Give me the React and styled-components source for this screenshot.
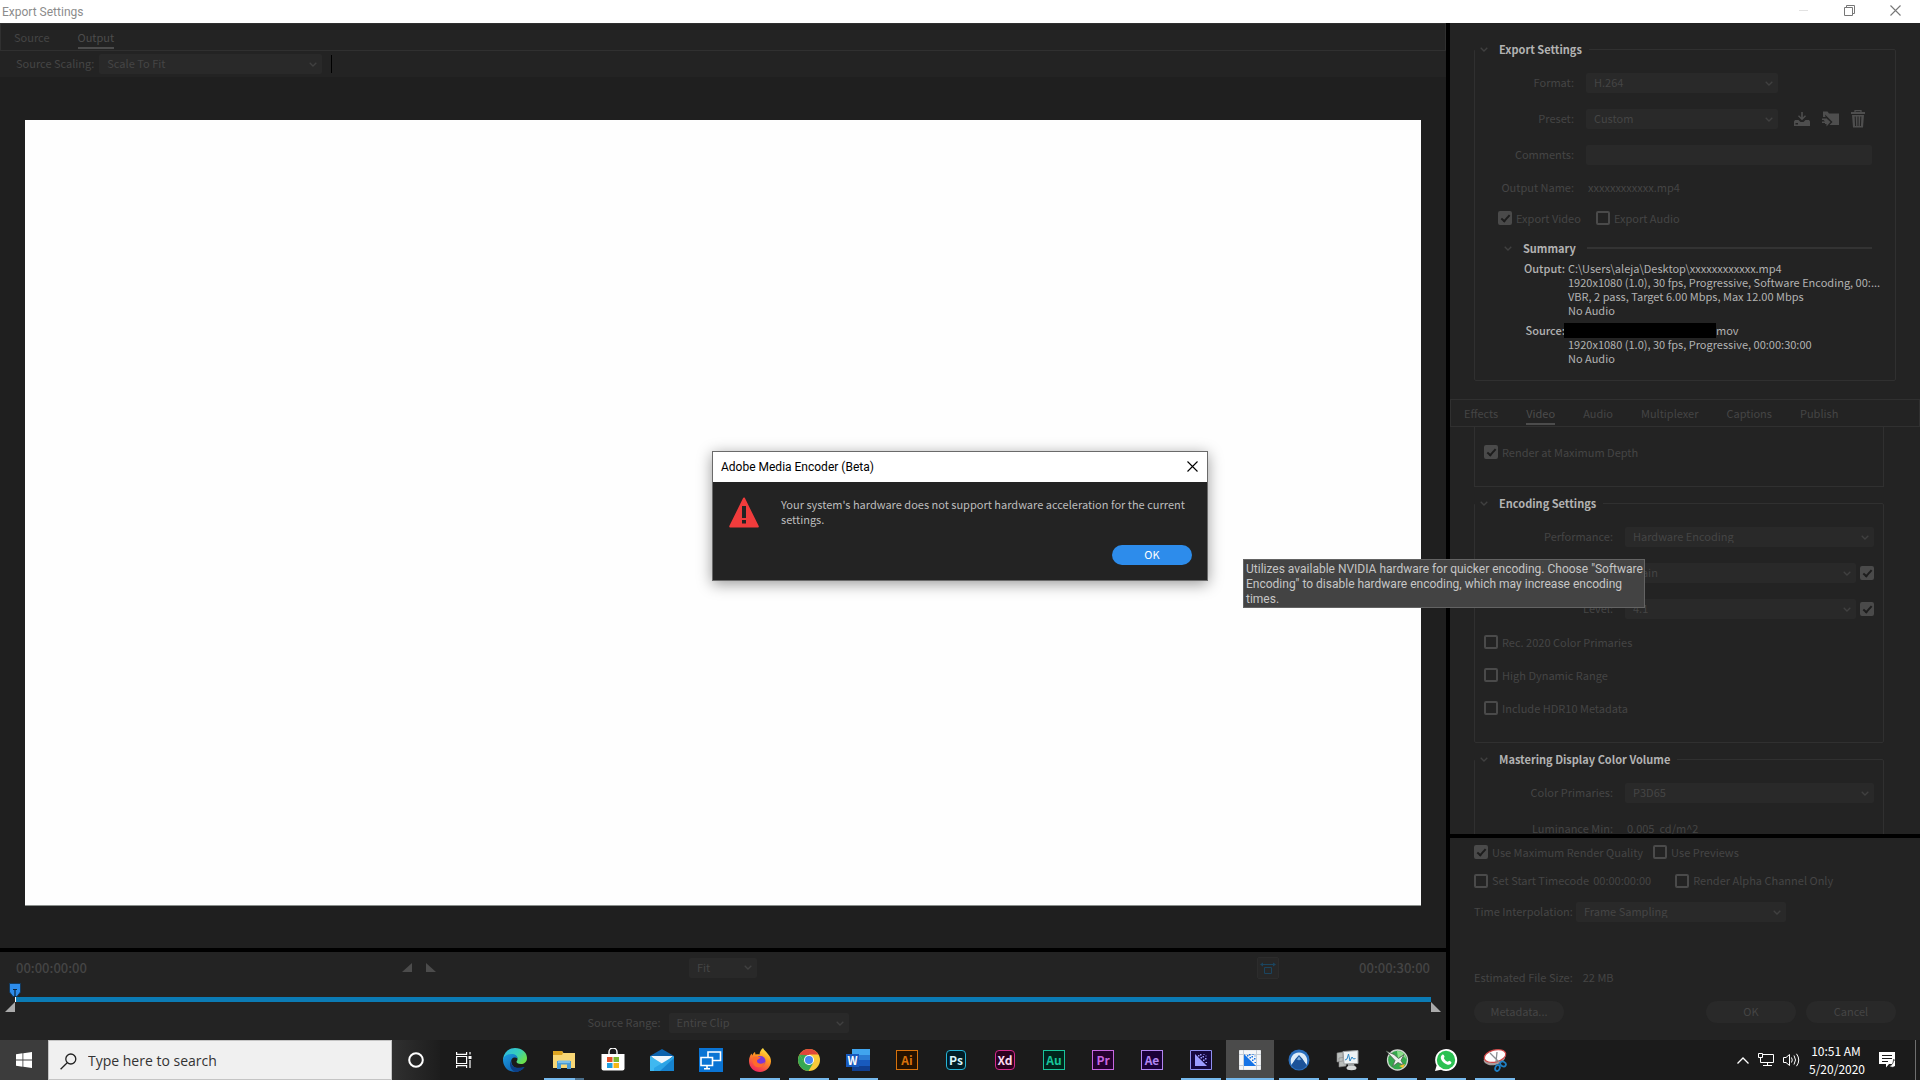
import React from "react";
import styled, { createGlobalStyle } from "styled-components";

const c = {
  panel: "#232323",
  well: "#1f1f1f",
  line: "#303030",
  field: "#292929",
  dim: "#454545",
  box: "#4a4a4a",
  text: "#b2b2b2",
  blue: "#0b7bb5",
};
const ui = `"Noto Sans CJK JP", "Noto Sans", sans-serif`;
const system = `"Open Sans", "Noto Sans", sans-serif`;
const caption = `Roboto, "Noto Sans", sans-serif`;

const Global = createGlobalStyle`
  *, *::before, *::after { box-sizing: border-box; }
  body { margin: 0; background: #000; }
  button, input, select { font: inherit; color: inherit; margin: 0; }
  svg { display: block; flex: none; }
`;

/* ---------- window ---------- */
const Screen = styled.div`
  position: relative;
  display: flex;
  flex-direction: column;
  height: 100vh;
  overflow: hidden;
  font: 11px/14px ${ui};
  color: ${c.dim};
  background: #000;
`;
const TitleBar = styled.header`
  display: flex;
  align-items: center;
  justify-content: space-between;
  flex: none;
  height: 23px;
  padding: 0 2px;
  background: #fff;
  color: #8c8c8c;
`;
const Title = styled.h1`
  margin: 0;
  font: 400 12px/16px ${caption};
`;
const WindowButtons = styled.div`
  display: flex;
  padding-bottom: 2px;
`;
const WindowButton = styled.button`
  display: grid;
  place-items: center;
  width: 46px;
  height: 20px;
  padding: 0;
  border: 0;
  background: none;
`;
const Workspace = styled.main`
  flex: 1;
  min-height: 0;
  display: grid;
  grid-template-columns: minmax(0, 1fr) 470px;
  gap: 4px;
`;
const Column = styled.div`
  display: flex;
  flex-direction: column;
  gap: 4px;
  min-height: 0;
  min-width: 0;
`;
const Panel = styled.section`
  display: flex;
  flex-direction: column;
  min-height: 0;
  flex: ${(p) => (p.$grow ? 1 : "none")};
  background: ${c.panel};
`;

/* ---------- controls ---------- */
const TabBar = styled.nav`
  display: flex;
  flex: none;
  gap: ${(p) => p.$gap}px;
  height: 28px;
  padding: 0 13px;
  border: 1px solid ${c.line};
`;
const Tab = styled.button`
  padding: 2px 0 0;
  border: 0;
  border-bottom: 2px solid ${(p) => (p.$on ? "#4c4c4c" : "transparent")};
  height: 25px;
  background: none;
  color: ${(p) => (p.$on ? "#4c4c4c" : c.dim)};
`;
const SelectBox = styled.span`
  display: grid;
  align-items: center;
  flex: ${(p) => (p.$w ? "none" : 1)};
  width: ${(p) => (p.$w ? p.$w + "px" : "auto")};
  height: 20px;
  border-radius: 2px;
  background: ${c.field};
  > * { grid-area: 1 / 1; }
  > svg { justify-self: end; margin-right: 5px; }
`;
const Native = styled.select`
  appearance: none;
  width: 100%;
  height: 20px;
  padding: 0 20px 2px 8px;
  border: 0;
  background: none;
  &:disabled { color: ${c.dim}; opacity: 1; }
`;
const TextBox = styled.input`
  flex: 1;
  min-width: 0;
  height: 20px;
  border: 0;
  border-radius: 2px;
  background: ${c.field};
`;
const Check = styled.label`
  display: flex;
  align-items: center;
  gap: 4px;
  height: 14px;
`;
const CheckText = styled.span`
  padding-bottom: 1px;
`;
const Box = styled.input`
  appearance: none;
  flex: none;
  display: grid;
  place-items: center;
  width: 14px;
  height: 14px;
  border: 2px solid ${c.box};
  border-radius: 2px;
  &:checked { background: ${c.box}; }
  &:checked::after {
    content: "";
    width: 9px;
    height: 5px;
    border: solid #1d1d1d;
    border-width: 0 0 2px 2px;
    transform: translateY(-1px) rotate(-48deg);
  }
`;
const Pill = styled.button`
  width: ${(p) => (p.$primary ? 80 : 90)}px;
  height: ${(p) => (p.$primary ? 20 : 22)}px;
  padding: 0 0 2px;
  border: 0;
  border-radius: 11px;
  background: ${(p) => (p.$primary ? "#2d8ceb" : "#292929")};
  color: ${(p) => (p.$primary ? "#fff" : c.dim)};
`;
const IconButton = styled.button`
  display: grid;
  place-items: center;
  width: ${(p) => (p.$framed ? 22 : 16)}px;
  height: ${(p) => (p.$framed ? 22 : 18)}px;
  padding: 0;
  border: ${(p) => (p.$framed ? "1px solid #2c2c2c" : 0)};
  border-radius: 2px;
  background: ${(p) => (p.$framed ? "#272727" : "none")};
  color: #4e4e4e;
`;

/* ---------- preview side ---------- */
const ScaleBar = styled.div`
  display: flex;
  align-items: center;
  gap: 5px;
  flex: none;
  height: 26px;
  padding-left: 16px;
`;
const Caption = styled.label`
  padding-bottom: 2px;
`;
const Tick = styled.span`
  width: 1px;
  height: 18px;
  margin-left: 4px;
  background: #000;
`;
const Preview = styled.div`
  flex: 1;
  display: flex;
  padding: 43px 25px 42px;
  background: ${c.well};
`;
const Canvas = styled.div`
  flex: 1;
  background: #fefefe;
  border-bottom: 1px solid #8a8f8c;
`;
const Transport = styled.div`
  display: grid;
  grid-template-columns: 1fr auto 1fr;
  align-items: center;
  height: 31px;
  padding: 0 16px;
`;
const Side = styled.div`
  display: flex;
  align-items: center;
  justify-content: ${(p) => (p.$end ? "flex-end" : "space-between")};
  gap: 80px;
  padding-right: ${(p) => (p.$end ? 0 : 250)}px;
`;
const Marks = styled.div`
  display: flex;
  gap: 8px;
`;
const Time = styled.output`
  font-size: 13px;
  font-weight: 500;
`;
const Timeline = styled.div`
  display: grid;
  grid-template-columns: 10px minmax(0, 1fr) 10px;
  grid-template-rows: 14px 5px 10px;
  padding: 0 5px;
`;
const Track = styled.div`
  grid-area: 2 / 2;
  background: ${c.blue};
  border-left: 1px solid #fff;
`;
const Playhead = styled.div`
  grid-area: 1 / 1 / 2 / 3;
  padding-left: 4px;
`;
const Handle = styled.div`
  grid-area: ${(p) => (p.$end ? "3 / 3" : "3 / 1")};
  width: 10px;
  height: 10px;
  background: #aaa;
  clip-path: ${(p) => (p.$end ? "polygon(0 0, 100% 100%, 0 100%)" : "polygon(100% 0, 100% 100%, 0 100%)")};
`;
const RangeRow = styled.div`
  display: flex;
  justify-content: center;
  align-items: center;
  gap: 8px;
  height: 28px;
  padding: 0 10px 6px 0;
`;

/* ---------- settings side ---------- */
const Group = styled.fieldset`
  margin: ${(p) => p.$margin};
  min-width: 0;
  padding: 15px 9px ${(p) => p.$bottom || 27}px 0;
  border: 1px solid ${c.line};
  border-radius: 2px;
  flex: none;
`;
const Legend = styled.legend`
  display: flex;
  align-items: center;
  gap: 11px;
  height: 18px;
  padding: 0 7px 0 5px;
  font-weight: 700;
  color: ${c.text};
`;
const Stack = styled.div`
  display: flex;
  flex-direction: column;
  gap: ${(p) => p.$gap}px;
  padding: ${(p) => p.$pad || 0};
`;
const Field = styled.div`
  display: grid;
  grid-template-columns: ${(p) => p.$label}px minmax(0, 1fr);
  gap: 12px;
  align-items: center;
  height: 20px;
  > label, > span:first-child {
    padding-bottom: 2px;
    text-align: right;
  }
`;
const Value = styled.span`
  padding: 0 0 2px 2px;
`;
const Inline = styled.div`
  display: flex;
  align-items: center;
  gap: ${(p) => p.$gap}px;
  padding: ${(p) => p.$pad || 0};
`;
const Icons = styled.div`
  display: flex;
  gap: 12px;
  padding-left: 16px;
`;
const SummaryHead = styled.h2`
  display: flex;
  align-items: center;
  gap: 11px;
  height: 20px;
  margin: 0;
  padding: 0 14px 0 29px;
  font-size: 11px;
  color: ${c.text};
  &::after {
    content: "";
    flex: 1;
    height: 2px;
    background: #333;
  }
`;
const Facts = styled.dl`
  display: grid;
  grid-template-columns: 90px minmax(0, 1fr);
  column-gap: 3px;
  row-gap: 6px;
  margin: 0;
  padding-top: 3px;
  color: ${c.text};
`;
const Term = styled.dt`
  text-align: right;
  font-weight: 500;
`;
const Detail = styled.dd`
  margin: 0;
`;
const Line = styled.div`
  display: flex;
  white-space: nowrap;
`;
const Redacted = styled.span`
  width: 152px;
  height: 15px;
  margin-bottom: -1px;
  background: #000;
`;
const RedactedLine = styled(Line)`
  margin-left: -4px;
`;
const Scroll = styled.div`
  flex: 1;
  min-height: 0;
  overflow: hidden;
`;
const Tail = styled.div`
  height: 60px;
  margin: 0 36px 0 24px;
  padding: 18px 9px;
  border: 1px solid ${c.line};
  border-top: 0;
`;
const Footer = styled.div`
  display: flex;
  flex-direction: column;
  height: 202px;
  padding: 7px 24px 17px;
`;
const Actions = styled.div`
  display: flex;
  gap: 10px;
  padding-top: 16px;
  > :first-child { margin-right: auto; }
`;

/* ---------- overlays ---------- */
const Dialog = styled.div`
  position: absolute;
  top: 451px;
  left: 50%;
  width: 496px;
  margin-left: -248px;
  border: 1px solid #6a6a6a;
  background: ${c.panel};
  color: #bdbdbd;
  box-shadow: 0 3px 14px rgba(0, 0, 0, 0.4);
`;
const DialogTitle = styled.div`
  display: flex;
  align-items: center;
  justify-content: space-between;
  height: 30px;
  padding: 0 0 0 8px;
  background: #fff;
  color: #000;
  font: 12px/16px ${caption};
`;
const DialogClose = styled(WindowButton)`
  width: 30px;
  height: 30px;
  padding-bottom: 2px;
`;
const DialogBody = styled.div`
  display: flex;
  gap: 22px;
  padding: 15px 15px 0 16px;
  line-height: 15px;
`;
const Message = styled.p`
  margin: 0;
`;
const DialogFoot = styled.div`
  display: flex;
  justify-content: flex-end;
  padding: 17px 15px 15px;
`;
const Tooltip = styled.div`
  position: absolute;
  top: 559px;
  right: 275px;
  width: 402px;
  padding: 2px 0 0 2px;
  border: 1px solid #636363;
  background: #434343;
  color: #c6c6c6;
  font: 12px/15px ${caption};
`;

/* ---------- taskbar ---------- */
const Taskbar = styled.footer`
  display: flex;
  flex: none;
  height: 40px;
  background: #1b1b1b;
  color: #fff;
`;
const Start = styled.button`
  display: grid;
  place-items: center;
  width: 48px;
  padding: 0;
  border: 0;
  background: #3c3c3c;
`;
const Search = styled.label`
  display: flex;
  align-items: center;
  gap: 11px;
  width: 344px;
  padding: 2px 0 0 11px;
  background: #f0f0f0;
  border: 1px solid #c4c4c4;
`;
const SearchInput = styled.input`
  flex: 1;
  min-width: 0;
  padding: 0;
  border: 0;
  outline: 0;
  background: none;
  font: 14px/20px ${system};
  &::placeholder { color: #333; opacity: 1; }
`;
const ShellButton = styled.button`
  display: grid;
  place-items: center;
  width: 48px;
  padding: 0;
  border: 0;
  background: ${(p) => (p.$lit ? "linear-gradient(90deg, #303030, #1d1d1d)" : "none")};
`;
const Apps = styled.div`
  display: flex;
  flex: 1;
  gap: 1px;
  padding-left: 3px;
`;
const AppButton = styled.button`
  display: flex;
  flex-direction: column;
  align-items: center;
  justify-content: center;
  width: 48px;
  padding: 2px 0 0;
  border: 0;
  background: ${(p) => (p.$active ? "#4b4b4b" : "none")};
  &::after {
    content: "";
    width: ${(p) => (p.$active ? 48 : 40)}px;
    height: 2px;
    background: ${(p) =>
      p.$stacked
        ? "linear-gradient(90deg, #76b9ed 31px, #4a6f8c 31px)"
        : p.$running || p.$active
        ? "#76b9ed"
        : "none"};
  }
`;
const IconSlot = styled.span`
  display: grid;
  place-items: center;
  flex: 1;
`;
const Adobe = styled.span`
  display: grid;
  place-items: center;
  width: ${(p) => (p.$round ? 20 : 22)}px;
  height: 20px;
  padding-bottom: 1px;
  border: 1px solid ${(p) => p.$fg};
  border-radius: ${(p) => (p.$round ? 4 : 0)}px;
  background: ${(p) => p.$bg};
  color: ${(p) => p.$ink || p.$fg};
  font: 700 12px/14px ${ui};
`;
const Tray = styled.div`
  display: flex;
  align-items: center;
  gap: 9px;
`;
const Clock = styled.time`
  width: 54px;
  margin-right: 7px;
  text-align: center;
  font: 12px/18px ${ui};
`;
const Peek = styled.span`
  width: 5px;
  height: 40px;
  margin-left: 11px;
  border-left: 1px solid #6e6e6e;
`;

/* ---------- drawings ---------- */
const Chevron = () => (
  <svg width="8" height="5" viewBox="0 0 8 5" fill="none" stroke="#404040" strokeWidth="1.3">
    <path d="M.7.7 4 4 7.3.7" />
  </svg>
);
const Cross = ({ color }) => (
  <svg width="11" height="11" viewBox="0 0 11 11" stroke={color} strokeWidth="1.1">
    <path d="M.5.5l10 10M10.5.5l-10 10" />
  </svg>
);
const Triangle = ({ flip }) => (
  <svg width="10" height="9" viewBox="0 0 10 9" fill="#4c4c4c">
    <path d={flip ? "M0 0v9h10z" : "M10 0v9H0z"} />
  </svg>
);
const SavePreset = () => (
  <svg width="16" height="15" viewBox="0 0 16 15" fill="currentColor">
    <path d="M7.2 0h1.6v5.400l2.200-2.200 1 1L8 8.300 4 4.200l1-1 2.200 2.200z" />
    <path d="M0 9.500 1 8h3.500l2 2h3l2-2H15l1 1.500V14H0z" />
    <path d="M1.500 11H4v1.500H1.500z" fill="#232323" />
  </svg>
);
const ImportPreset = () => (
  <svg width="17" height="16" viewBox="0 0 17 16">
    <path d="M1 .5h4.500l1.500 2h10V14H1z" fill="currentColor" />
    <path d="M0 6h3.500l-.5-2.500L9 9.500 10.500 11 5.500 16H0z" fill="#232323" />
    <path d="M0 7.500h4L7.500 11 4.500 14.500V12H0v-1.500h3L1.500 9H0zM4 7l4.500 4-4 4.500V13H3v-3h1.500z" fill="currentColor" />
  </svg>
);
const Trash = () => (
  <svg width="16" height="18" viewBox="0 0 16 18">
    <path d="M5 2V.7h6V2" fill="none" stroke="currentColor" strokeWidth="1.300" />
    <path d="M1 2h14v2H1zM2 5h12l-1 12.500H3z" fill="currentColor" />
    <path d="M5.200 6.500l.4 9.500M8 6.500V16M10.800 6.500l-.4 9.500" stroke="#232323" strokeWidth="1.100" />
  </svg>
);
const Aspect = () => (
  <svg width="16" height="14" viewBox="0 0 16 14" fill="none" stroke="#1b455f">
    <path d="M1 3.500h14M4.500 12.500v-6h7v6z" />
    <path d="M0 3.500 3 1.500v4zM16 3.500l-3-2v4z" fill="#1b455f" stroke="none" />
  </svg>
);
const PlayheadIcon = () => (
  <svg width="12" height="14" viewBox="0 0 12 14">
    <path d="M.5.500h11V9L8 13.500H4L.5 9z" fill="#2d8ceb" stroke="#123a5e" />
    <path d="M4 6.500h4M6 6.500V14" stroke="#10263a" strokeWidth="1.200" />
  </svg>
);
const Warning = () => (
  <svg width="30" height="31" viewBox="0 0 30 31">
    <path d="M15 1.500 28.800 29.500H1.200z" fill="#f03c3c" stroke="#f03c3c" strokeWidth="2" strokeLinejoin="round" />
    <path d="M13 9h4v12h-4zM13 23h4v3.500h-4z" fill="#232323" />
  </svg>
);
const WinLogo = () => (
  <svg width="16" height="16" viewBox="0 0 16 16" fill="#fff">
    <path d="M0 2.200 6.500 1.300V7.600H0zM7.300 1.200 16 0v7.600H7.300zM0 8.400h6.500v6.300L0 13.800zM7.300 8.400H16V16l-8.700-1.200z" />
  </svg>
);
const Magnifier = () => (
  <svg width="17" height="17" viewBox="0 0 17 17" fill="none" stroke="#222" strokeWidth="1.300">
    <circle cx="10.800" cy="6" r="5" />
    <path d="M7.200 9.700.6 16.300" />
  </svg>
);
const Cortana = () => (
  <svg width="16" height="16" viewBox="0 0 16 16" fill="none" stroke="#fff" strokeWidth="2">
    <circle cx="8" cy="8" r="6.800" />
  </svg>
);
const TaskView = () => (
  <svg width="16" height="16" viewBox="0 0 16 16" fill="none" stroke="#fff" strokeWidth="1.200">
    <path d="M.6 4.500h10v7h-10zM.6 0v2.300h10V0M.6 16v-2.300h10V16M14 0v2.500M14 8v8" />
    <path d="M12.500 4h3v3h-3z" fill="#fff" stroke="none" />
  </svg>
);
const Edge = () => (
  <svg width="24" height="24" viewBox="0 0 24 24">
    <defs>
      <linearGradient id="edgeTop" x1="0" y1="0" x2="1" y2=".6">
        <stop offset="0" stopColor="#2bb5ea" />
        <stop offset=".6" stopColor="#38cfb8" />
        <stop offset="1" stopColor="#6be04d" />
      </linearGradient>
      <linearGradient id="edgeLow" x1="0" y1="0" x2="1" y2="1">
        <stop offset="0" stopColor="#1b9de2" />
        <stop offset="1" stopColor="#0c4fa0" />
      </linearGradient>
    </defs>
    <path d="M0 11C1 4 6 0 12 0c7 0 12 4.500 12 10 0 4-3 6-6 6-3.200 0-4.500-1.300-4.500-2.200 0-.8 1-1.100 1-2.800C14.500 8.500 12 7 9 7 4 7 1 9 0 13z" fill="url(#edgeTop)" />
    <path d="M0 12C.5 8.500 4 6 8.500 6c4 0 6 2 6 4.600-1-1-2.300-1.300-3.500-1C8 10.500 7.500 13.500 9 16.500c2 4 7 5 12.500 2.500C19 22.500 15.500 24 12 24 5 24 0 18.500 0 12z" fill="url(#edgeLow)" />
    <path d="M8.300 12.500C7.500 18 12 21.500 21.500 19 19 22.600 15.500 24 12 24 7.500 22 5.500 16 8.300 12.500z" fill="#0d3f86" />
  </svg>
);
const Explorer = () => (
  <svg width="22" height="20" viewBox="0 0 22 20">
    <path d="M0 1h9l1.500 2H22v15H0z" fill="#f8d775" />
    <path d="M0 1h9l1 2-1 2H0z" fill="#dda521" />
    <path d="M4 11h14v8h-4v-4.500H8V19H4z" fill="#4a9cd6" />
    <path d="M5 10.500h12V13H5z" fill="#7cc0ea" />
  </svg>
);
const Store = () => (
  <svg width="24" height="24" viewBox="0 0 24 24">
    <path d="M8 6V4a4 4 0 0 1 8 0v2" fill="none" stroke="#fff" strokeWidth="1.400" />
    <path d="M.5 6h23v14.500a2 2 0 0 1-2 2h-19a2 2 0 0 1-2-2z" fill="#fff" />
    <path d="M6 9h5.500v5H6z" fill="#e5502a" />
    <path d="M12.500 9H18v5h-5.500z" fill="#7db72f" />
    <path d="M6 15h5.500v5H6z" fill="#1f9fe0" />
    <path d="M12.500 15H18v5h-5.500z" fill="#f7b718" />
  </svg>
);
const Mail = () => (
  <svg width="24" height="22" viewBox="0 0 24 22">
    <path d="M0 7 12 0l12 7v2H0z" fill="#0a62ad" />
    <path d="M1 7h22L14 15H8z" fill="#eef6fc" />
    <path d="M0 7l12 7.500L7 22H0z" fill="#3fb8f0" />
    <path d="M24 7 4 19v3h20z" fill="#2ba4e6" />
    <path d="M24 9v13H10z" fill="#1683cf" />
  </svg>
);
const Remote = () => (
  <svg width="24" height="24" viewBox="0 0 24 24">
    <path d="M0 0h24v24H0z" fill="#0a74d4" />
    <g stroke="#fff" strokeWidth="1.600" fill="#0a74d4">
      <path d="M9 4h12.500v8.500H9z" />
      <path d="M2 9.500h11.500v8H2zM8 17.500V20.500M5 20.800h6" />
    </g>
  </svg>
);
const Firefox = () => (
  <svg width="24" height="24" viewBox="0 0 24 24">
    <defs>
      <linearGradient id="fox" x1=".8" y1="0" x2=".3" y2="1">
        <stop offset="0" stopColor="#fff04a" />
        <stop offset=".4" stopColor="#ff9a1f" />
        <stop offset="1" stopColor="#f0225f" />
      </linearGradient>
    </defs>
    <path d="M15 0c1 2.500 3 3 4.500 5.500C22 8 23 10.500 23 13.500 22.500 19.500 18 24 12 24S1 19.500 1 13c0-3 1-5.500 2.500-7.500l.8 2C5 5.500 6 4.500 7 4l.5 2.500c1.500-.5 3-.5 4 0C11.500 4 13 1.500 15 0z" fill="url(#fox)" />
    <circle cx="12.500" cy="13" r="5" fill="#7a37d8" />
    <path d="M5 9c3-1.500 5 .5 7.500 0 0 2-3.500 2-3.500 4 0 3 5 4 8 1-1 4-4.500 6-8 5-4-1-5.500-6-4-10z" fill="#ff6a2b" />
  </svg>
);
const Chrome = () => (
  <svg width="22" height="22" viewBox="0 0 22 22">
    <circle cx="11" cy="11" r="11" fill="#f9cb3a" />
    <path d="M11 11 1.500 5.500A11 11 0 0 1 20.500 5.500H11z" fill="#e0473a" />
    <path d="M1.500 5.500A11 11 0 0 0 10.500 22L15.500 13.500 6.300 13.600z" fill="#36a853" />
    <path d="M1.500 5.500 6.500 14 11 6z" fill="#36a853" />
    <path d="M1.500 5.500 4.500 2.200 11 6z" fill="#e0473a" />
    <circle cx="11" cy="11" r="5" fill="#fff" />
    <circle cx="11" cy="11" r="4" fill="#4486f4" />
  </svg>
);
const WordIcon = styled.span`
  display: grid;
  align-items: center;
  width: 24px;
  height: 22px;
  padding: 4px 0;
  background: linear-gradient(#41a5ee 0 6px, #2b7cd3 6px 11px, #185abd 11px 17px, #103f91 17px) 6px 0 / 18px 22px no-repeat;
  > b {
    width: 13px;
    background: #185abd;
    text-align: center;
    font: 700 11px/13px ${ui};
  }
`;
const Encoder = ({ beta }) => (
  <svg width="22" height="20" viewBox="0 0 22 20">
    <path d="M.5.500h21v19H.5z" fill={beta ? "#f4f6f8" : "#15073f"} stroke={beta ? "#e8eaec" : "#8f8ff0"} />
    {beta && <path d="M4.500 0v20M17.500 0v20M0 4.500h22M0 15.500h22" stroke="#c3cdd8" fill="none" />}
    <g fill={beta ? "#1473e6" : "#9b9bff"}>
      <path d="M5 4 17 16H5z" />
      <path d="M8 5h1.500v1.500H8zM10.500 7H12v1.500h-1.500zM13 9.500h1.500V11H13zM10 4h1.500v1.500H10zM12.500 6H14v1.500h-1.500zM15 8h1.500v1.500H15zM13.500 4h1v1h-1zM15.500 5.500h1v1h-1zM15.500 12h1.500v1h-1.500z" />
    </g>
  </svg>
);
const Nord = () => (
  <svg width="22" height="22" viewBox="0 0 22 22">
    <circle cx="11" cy="11" r="10.500" fill="#2a6ebc" />
    <path d="M3.500 16C1 9 5 3.500 11 3.500S21 9 18.500 16L14 9.500 11 6 8 9.500z" fill="#dcebf8" />
    <path d="M3.500 16 8 9.500 11 6.500l3 3 4.500 6.500c-3.500 6-11.500 6-15 0z" fill="#1c5298" />
    <path d="M8.500 11 11 7.500l2.500 3.500-1.500-.6-1 1-1-1z" fill="#7fb2e2" />
  </svg>
);
const Monitor = () => (
  <svg width="24" height="22" viewBox="0 0 24 22">
    <path d="M1 4l6-1v9l-6 1zM3 9l7-1v9l-7 1z" fill="#b9bdbb" stroke="#888" strokeWidth=".6" />
    <path d="M7 2.500 22 1.500v13L8 15z" fill="#eef3f5" stroke="#9a9e9f" />
    <path d="M9 11l2-1 1.500-5 1.500 7 2-4 1.500 2 2-.5" fill="none" stroke="#2b86c5" />
    <path d="M12 15h6l1 3h-7z" fill="#9da1a2" />
    <ellipse cx="15.500" cy="19" rx="5" ry="2.200" fill="#d5d8d8" />
  </svg>
);
const GreenOrb = () => (
  <svg width="24" height="22" viewBox="0 0 24 22">
    <circle cx="12.500" cy="11" r="10" fill="#35a84c" stroke="#cfd6cf" strokeWidth="1.300" />
    <path d="M12 2c6 0 9 4 9 8-3-4-7-3-8 0z" fill="#8be08a" />
    <path d="M1 2l8 3.500 4.500 4L19 5.500l-3 6 3 5-6-3-5.500 4 2.500-6z" fill="#edf0ed" stroke="#4c5a4e" strokeWidth=".8" />
    <path d="M14 17l6-2-2 4z" fill="#f2c02c" />
  </svg>
);
const Whatsapp = () => (
  <svg width="24" height="22" viewBox="0 0 24 22">
    <path d="M12 0a11 11 0 1 1-5 20.700L1 22l1.600-5.500A11 11 0 0 1 12 0z" fill="#fff" />
    <circle cx="12" cy="11" r="9.200" fill="#2bc152" />
    <path d="M8 6c1-1 2 0 2.500 1.500.2.800-.8 1.200-.6 1.700 1 2 2 2.800 3.800 3.600.6.200 1-1 1.500-1 1.500.6 2.500 1.200 2.200 2-.6 2-2.700 2.200-4.400 1.600-3-1-5-3.200-6-5.400-.6-1.600 0-3.200 1-4z" fill="#fff" />
  </svg>
);
const Snip = () => (
  <svg width="24" height="24" viewBox="0 0 24 24">
    <ellipse cx="11.500" cy="10.500" rx="11" ry="6.500" transform="rotate(-14 11.500 10.500)" fill="#a89f9f" />
    <ellipse cx="12" cy="8" rx="11" ry="6" transform="rotate(-14 12 8)" fill="#fff" stroke="#d04848" strokeWidth="1.200" />
    <path d="M7 5l9 9M14 4l-1 10" stroke="#8b8f92" strokeWidth="1.300" />
    <g fill="none" stroke="#1f7fc4" strokeWidth="1.800">
      <ellipse cx="20" cy="16" rx="3" ry="2.300" transform="rotate(30 20 16)" />
      <ellipse cx="14.500" cy="20" rx="2.200" ry="3" transform="rotate(20 14.500 20)" />
    </g>
  </svg>
);

/* ---------- composed controls ---------- */
const Choice = ({ id, value, w, label }) => (
  <SelectBox $w={w}>
    <Native id={id} aria-label={label} disabled>
      <option>{value}</option>
    </Native>
    <Chevron />
  </SelectBox>
);
const Tickbox = ({ children, on }) => (
  <Check>
    <Box type="checkbox" defaultChecked={on} disabled />
    <CheckText>{children}</CheckText>
  </Check>
);
const Tabs = ({ items, active, gap }) => (
  <TabBar $gap={gap}>
    {items.map((t) => (
      <Tab key={t} type="button" $on={t === active}>
        {t}
      </Tab>
    ))}
  </TabBar>
);

const apps = [
  { name: "Edge", icon: <Edge /> },
  { name: "File Explorer", icon: <Explorer />, running: true, stacked: true },
  { name: "Store", icon: <Store /> },
  { name: "Mail", icon: <Mail /> },
  { name: "Remote Desktop", icon: <Remote /> },
  { name: "Firefox", icon: <Firefox />, running: true },
  { name: "Chrome", icon: <Chrome />, running: true },
  { name: "Word", icon: <WordIcon><b>W</b></WordIcon>, running: true },
  { name: "Illustrator", icon: <Adobe $fg="#d8720c" $bg="#251200">Ai</Adobe> },
  { name: "Photoshop", icon: <Adobe $round $fg="#26b5d8" $bg="#001d26" $ink="#d9f5fc">Ps</Adobe> },
  { name: "XD", icon: <Adobe $round $fg="#d42a8c" $bg="#2b001e" $ink="#fbd9ee">Xd</Adobe> },
  { name: "Audition", icon: <Adobe $fg="#19c49a" $bg="#00241c">Au</Adobe> },
  { name: "Premiere Pro", icon: <Adobe $fg="#c766e0" $bg="#24002e">Pr</Adobe> },
  { name: "After Effects", icon: <Adobe $fg="#b184f0" $bg="#1a0038">Ae</Adobe> },
  { name: "Media Encoder", icon: <Encoder />, running: true },
  { name: "Media Encoder Beta", icon: <Encoder beta />, active: true },
  { name: "NordVPN", icon: <Nord />, running: true },
  { name: "Performance Monitor", icon: <Monitor />, running: true },
  { name: "Game Tools", icon: <GreenOrb />, running: true },
  { name: "WhatsApp", icon: <Whatsapp />, running: true },
  { name: "Snipping Tool", icon: <Snip />, running: true },
];

export default function App() {
  return (
    <Screen>
      <Global />
      <TitleBar>
        <Title>Export Settings</Title>
        <WindowButtons>
          <WindowButton aria-label="Minimize">
            <svg width="9" height="1"><path d="M0 .5h9" stroke="#e2e2e2" /></svg>
          </WindowButton>
          <WindowButton aria-label="Restore">
            <svg width="11" height="11" viewBox="0 0 11 11" fill="none" stroke="#777">
              <path d="M.5 2.500h8v8h-8zM2.500 2.500v-2h8v8h-2" />
            </svg>
          </WindowButton>
          <WindowButton aria-label="Close"><Cross color="#777" /></WindowButton>
        </WindowButtons>
      </TitleBar>

      <Workspace>
        <Column>
          <Panel $grow>
            <Tabs items={["Source", "Output"]} active="Output" gap={28} />
            <ScaleBar>
              <Caption htmlFor="scaling">Source Scaling:</Caption>
              <Choice id="scaling" value="Scale To Fit" w={223} />
              <Tick />
            </ScaleBar>
            <Preview><Canvas /></Preview>
          </Panel>
          <Panel>
            <Transport>
              <Side>
                <Time>00:00:00:00</Time>
                <Marks>
                  <IconButton aria-label="Set in point"><Triangle /></IconButton>
                  <IconButton aria-label="Set out point"><Triangle flip /></IconButton>
                </Marks>
              </Side>
              <Choice label="Zoom level" value="Fit" w={68} />
              <Side $end>
                <IconButton $framed aria-label="Aspect ratio correction"><Aspect /></IconButton>
                <Time>00:00:30:00</Time>
              </Side>
            </Transport>
            <Timeline>
              <Playhead><PlayheadIcon /></Playhead>
              <Track />
              <Handle />
              <Handle $end />
            </Timeline>
            <RangeRow>
              <Caption htmlFor="range">Source Range:</Caption>
              <Choice id="range" value="Entire Clip" w={180} />
            </RangeRow>
          </Panel>
        </Column>

        <Column>
          <Panel $grow>
            <Group $margin="17px 24px 18px 24px" $bottom={15}>
              <Legend><Chevron />Export Settings</Legend>
              <Stack $gap={16} $pad="0 14px 0 0">
                <Field $label={99}>
                  <label htmlFor="format">Format:</label>
                  <Choice id="format" value="H.264" w={192} />
                </Field>
                <Field $label={99}>
                  <label htmlFor="preset">Preset:</label>
                  <Inline $gap={0}>
                    <Choice id="preset" value="Custom" w={192} />
                    <Icons>
                      <IconButton aria-label="Save preset"><SavePreset /></IconButton>
                      <IconButton aria-label="Import preset"><ImportPreset /></IconButton>
                      <IconButton aria-label="Delete preset"><Trash /></IconButton>
                    </Icons>
                  </Inline>
                </Field>
                <Field $label={99}>
                  <label htmlFor="comments">Comments:</label>
                  <TextBox id="comments" disabled />
                </Field>
              </Stack>
              <Stack $gap={13} $pad="13px 0 0">
                <Field $label={99}>
                  <span>Output Name:</span>
                  <Value>xxxxxxxxxxxx.mp4</Value>
                </Field>
                <Inline $gap={15} $pad="0 0 0 23px">
                  <Tickbox on>Export Video</Tickbox>
                  <Tickbox>Export Audio</Tickbox>
                </Inline>
                <div>
                  <SummaryHead><Chevron />Summary</SummaryHead>
                  <Facts>
                    <Term>Output:</Term>
                    <Detail>
                      <Line>C:\Users\aleja\Desktop\xxxxxxxxxxxx.mp4</Line>
                      <Line>1920x1080 (1.0), 30 fps, Progressive, Software Encoding, 00:...</Line>
                      <Line>VBR, 2 pass, Target 6.00 Mbps, Max 12.00 Mbps</Line>
                      <Line>No Audio</Line>
                    </Detail>
                    <Term>Source:</Term>
                    <Detail>
                      <RedactedLine><Redacted />mov</RedactedLine>
                      <Line>1920x1080 (1.0), 30 fps, Progressive, 00:00:30:00</Line>
                      <Line>No Audio</Line>
                    </Detail>
                  </Facts>
                </div>
              </Stack>
            </Group>

            <Tabs items={["Effects", "Video", "Audio", "Multiplexer", "Captions", "Publish"]} active="Video" gap={28} />
            <Scroll>
              <Tail><Tickbox on>Render at Maximum Depth</Tickbox></Tail>
              <Group $margin="7px 36px 7px 24px">
                <Legend><Chevron />Encoding Settings</Legend>
                <Stack $gap={16}>
                  <Field $label={138}>
                    <label htmlFor="performance">Performance:</label>
                    <Choice id="performance" value="Hardware Encoding" />
                  </Field>
                  <Field $label={138}>
                    <label htmlFor="profile">Profile:</label>
                    <Inline $gap={4}>
                      <Choice id="profile" value="Main" />
                      <Box type="checkbox" aria-label="Match source profile" defaultChecked disabled />
                    </Inline>
                  </Field>
                  <Field $label={138}>
                    <label htmlFor="level">Level:</label>
                    <Inline $gap={4}>
                      <Choice id="level" value="4.1" />
                      <Box type="checkbox" aria-label="Match source level" defaultChecked disabled />
                    </Inline>
                  </Field>
                </Stack>
                <Stack $gap={19} $pad="16px 0 0 9px">
                  <Tickbox>Rec. 2020 Color Primaries</Tickbox>
                  <Tickbox>High Dynamic Range</Tickbox>
                  <Tickbox>Include HDR10 Metadata</Tickbox>
                </Stack>
              </Group>
              <Group $margin="0 36px 0 24px">
                <Legend><Chevron />Mastering Display Color Volume</Legend>
                <Stack $gap={16}>
                  <Field $label={138}>
                    <label htmlFor="primaries">Color Primaries:</label>
                    <Choice id="primaries" value="P3D65" />
                  </Field>
                  <Field $label={138}>
                    <span>Luminance Min:</span>
                    <Inline $gap={3}><Value>0.005</Value><Value>cd/m^2</Value></Inline>
                  </Field>
                </Stack>
              </Group>
            </Scroll>
          </Panel>
          <Panel>
            <Footer>
              <Inline $gap={10}>
                <Tickbox on>Use Maximum Render Quality</Tickbox>
                <Tickbox>Use Previews</Tickbox>
              </Inline>
              <Inline $gap={24} $pad="14px 0">
                <Inline $gap={4}>
                  <Tickbox>Set Start Timecode</Tickbox>
                  <CheckText>00:00:00:00</CheckText>
                </Inline>
                <Tickbox>Render Alpha Channel Only</Tickbox>
              </Inline>
              <Inline $gap={3}>
                <Caption htmlFor="interpolation">Time Interpolation:</Caption>
                <Choice id="interpolation" value="Frame Sampling" w={210} />
              </Inline>
              <Inline $gap={10} $pad="48px 0 1px">
                <span>Estimated File Size:</span>
                <span>22 MB</span>
              </Inline>
              <Actions>
                <Pill>Metadata...</Pill>
                <Pill>OK</Pill>
                <Pill>Cancel</Pill>
              </Actions>
            </Footer>
          </Panel>
        </Column>
      </Workspace>

      <Taskbar>
        <Start aria-label="Start"><WinLogo /></Start>
        <Search>
          <Magnifier />
          <SearchInput type="text" aria-label="Search" placeholder="Type here to search" />
        </Search>
        <ShellButton $lit aria-label="Cortana"><Cortana /></ShellButton>
        <ShellButton aria-label="Task View"><TaskView /></ShellButton>
        <Apps>
          {apps.map((a) => (
            <AppButton key={a.name} aria-label={a.name} $running={a.running} $stacked={a.stacked} $active={a.active}>
              <IconSlot>{a.icon}</IconSlot>
            </AppButton>
          ))}
        </Apps>
        <Tray>
          <svg width="12" height="7" viewBox="0 0 12 7" fill="none" stroke="#fff" strokeWidth="1.300">
            <path d="M.5 6.500 6 1l5.500 5.500" />
          </svg>
          <svg width="16" height="14" viewBox="0 0 16 14" fill="none" stroke="#fff">
            <path d="M4.500 1.500h11v8h-13v-5M9.500 9.500v3M5 12.500h9M.5.500h4v4h-4z" />
          </svg>
          <svg width="17" height="14" viewBox="0 0 17 14" fill="none" stroke="#fff">
            <path d="M.5 4.500h2.500L6.500 1.500v11L3 9.500H.5zM8.500 4.500q1.500 2.500 0 5M11 2.500q3 4.500 0 9M13.500.800q4.500 6.200 0 12.400" />
          </svg>
          <Clock>10:51 AM<br />5/20/2020</Clock>
          <IconButton aria-label="Notifications">
            <svg width="16" height="16" viewBox="0 0 16 16">
              <path d="M0 0h16v12h-6l-3 3.500V12H0z" fill="#fff" />
              <path d="M3 3.500h10M3 6.500h10M3 9.500h6" stroke="#1b1b1b" />
              <path d="M14.500 7.500a4 4 0 1 1-4.500 6c2 .5 4.500-1.500 4.500-6z" fill="#fff" stroke="#1b1b1b" strokeWidth=".8" />
            </svg>
          </IconButton>
          <Peek />
        </Tray>
      </Taskbar>

      <Tooltip role="tooltip">
        Utilizes available NVIDIA hardware for quicker encoding. Choose "Software Encoding" to disable hardware encoding, which may increase encoding times.
      </Tooltip>
      <Dialog role="alertdialog" aria-label="Adobe Media Encoder (Beta)">
        <DialogTitle>
          Adobe Media Encoder (Beta)
          <DialogClose aria-label="Close dialog"><Cross color="#000" /></DialogClose>
        </DialogTitle>
        <DialogBody>
          <Warning />
          <Message>Your system's hardware does not support hardware acceleration for the current settings.</Message>
        </DialogBody>
        <DialogFoot><Pill $primary>OK</Pill></DialogFoot>
      </Dialog>
    </Screen>
  );
}
